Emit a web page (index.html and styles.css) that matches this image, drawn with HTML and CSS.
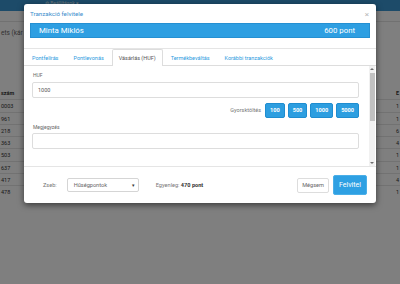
FILE: index.html
```html
<!DOCTYPE html>
<html lang="hu">
  <head>
    <meta charset="utf-8">
    <meta name="viewport" content="width=device-width, initial-scale=1">
    <title>Tranzakció felvitele</title>
    <link rel="stylesheet" href="styles.css">
  </head>
  <body>
    <div class='page'>
        <div class='navbar'><span class='nav-item'>&#9881; Beállítások &#9662;</span></div>
        <div class='subbar'></div>
        <div class='search'>ets (kár</div>
        <div class='table'>
            <div class='row head'><span>szám</span><span></span><span>E</span></div>
            <div class='row'><span>0003</span><span></span><span>1</span></div>
            <div class='row'><span>961</span><span></span><span>1</span></div>
            <div class='row'><span>218</span><span></span><span>6</span></div>
            <div class='row'><span>363</span><span></span><span>4</span></div>
            <div class='row'><span>503</span><span></span><span>1</span></div>
            <div class='row'><span>637</span><span></span><span>1</span></div>
            <div class='row'><span>417</span><span></span><span>4</span></div>
            <div class='row'><span>478</span><span></span><span>1</span></div>
        </div>
    </div>
    <div class='backdrop'></div>
    <div class='modal'>
        <div class='modal-header'>
            <div class='title-row'>
                <h4 class='title'>Tranzakció felvitele</h4>
                <span class='close'>&times;</span>
            </div>
            <div class='member'><span>Minta Miklós</span><span>600 pont</span></div>
        </div>
        <ul class='tabs'>
            <li class='tab'>Pontfelírás</li>
            <li class='tab'>Pontlevonás</li>
            <li class='tab active'>Vásárlás (HUF)</li>
            <li class='tab'>Termékbeváltás</li>
            <li class='tab'>Korábbi tranzakciók</li>
        </ul>
        <div class='pane'>
            <div class='pane-body'>
                <div class='label'>HUF</div>
                <div class='field'>1000</div>
                <div class='quick'>
                    <span class='quick-label'>Gyorsktöltés</span>
                    <span class='btn-num'>100</span>
                    <span class='btn-num'>500</span>
                    <span class='btn-num'>1000</span>
                    <span class='btn-num'>5000</span>
                </div>
                <div class='label second'>Megjegyzés</div>
                <div class='field'></div>
            </div>
            <div class='scrollbar'>
                <span class='arrow up'></span>
                <span class='thumb'></span>
                <span class='arrow down'></span>
            </div>
        </div>
        <div class='modal-footer'>
            <span class='zseb'>Zseb:</span>
            <div class='select'><span>Hűségpontok</span><span class='caret'>&#9662;</span></div>
            <span class='balance'>Egyenleg: <b>470 pont</b></span>
            <div class='actions'>
                <span class='btn-cancel'>Mégsem</span>
                <span class='btn-save'>Felvitel</span>
            </div>
        </div>
    </div>
  </body>
</html>
```

FILE: styles.css
```css
body {
    margin: 0;
    width: 400px;
    height: 284px;
    overflow: hidden;
    position: relative;
    background-color: #FFFFFF;
    font-family: Roboto, "Liberation Sans", sans-serif;
    color: #333333;
}
.navbar {
    height: 11px;
    background-color: #3B97D3;
    padding-left: 45px;
    box-sizing: border-box;
}
.nav-item {
    display: block;
    font-size: 5px;
    line-height: 7px;
    color: #D8ECF8;
}
.subbar {
    height: 10px;
    border-bottom: 1px solid #E2E2E2;
}
.search {
    height: 22px;
    white-space: nowrap;
    line-height: 22px;
    font-size: 6.5px;
    color: #666666;
    padding-left: 1px;
}
.table {
    margin-top: 43px;
}
.row {
    display: grid;
    grid-template-columns: 24px 1fr 10px;
    height: 12.25px;
    line-height: 12.25px;
    border-top: 1px solid #E4E4E4;
    box-sizing: border-box;
    font-size: 5.5px;
    color: #333333;
}
.row span:first-child {
    padding-left: 1px;
}
.row span:last-child {
    padding-left: 6px;
}
.row.head {
    border-top: none;
    font-weight: bold;
}
.backdrop {
    position: absolute;
    top: 0;
    left: 0;
    width: 100%;
    height: 100%;
    background-color: rgba(0,0,0,0.5);
}
.modal {
    position: absolute;
    top: 4px;
    left: 24px;
    width: 352px;
    height: 199px;
    display: flex;
    flex-direction: column;
    background-color: #FFFFFF;
    border-radius: 3px;
    box-shadow: 0 2px 6px rgba(0,0,0,0.55);
}
.modal-header {
    padding: 6px 6px 10px;
    border-bottom: 1px solid #E5E5E5;
}
.title-row {
    display: flex;
    justify-content: space-between;
    align-items: center;
    height: 8px;
}
.title {
    margin: 0;
    font-size: 6.2px;
    font-weight: normal;
    color: #3A8DCC;
}
.close {
    font-size: 8px;
    color: #B8B8B8;
    padding-right: 1px;
}
.member {
    margin-top: 5px;
    height: 15px;
    box-sizing: border-box;
    display: flex;
    justify-content: space-between;
    align-items: center;
    padding: 0 14px 0 8px;
    background-color: #2E9FE2;
    border: 1px solid #2590D2;
    color: #FFFFFF;
    font-size: 7.8px;
}
.tabs {
    display: flex;
    margin: 0;
    padding: 0 0 0 1px;
    list-style: none;
    border-bottom: 1px solid #DDDDDD;
}
.tab {
    padding: 4px 6px 3px;
    margin-right: 1px;
    margin-bottom: -1px;
    line-height: 8px;
    font-size: 5.5px;
    color: #2D9BE0;
    border: 1px solid transparent;
    border-bottom: none;
    border-radius: 2px 2px 0 0;
}
.tab.active {
    color: #555555;
    background-color: #FFFFFF;
    border-color: #DDDDDD;
    padding-bottom: 4px;
}
.pane {
    height: 100px;
    display: flex;
}
.pane-body {
    flex: 1;
    overflow: hidden;
    padding: 6px 10px 0 8px;
}
.scrollbar {
    width: 6px;
    margin-right: 1px;
    display: flex;
    flex-direction: column;
    align-items: center;
    background-color: #F1F1F1;
}
.arrow {
    width: 0;
    height: 0;
    border-left: 2px solid transparent;
    border-right: 2px solid transparent;
}
.arrow.up {
    margin-top: 2px;
    border-bottom: 2px solid #6E6E6E;
}
.arrow.down {
    margin-top: auto;
    margin-bottom: 2px;
    border-top: 2px solid #6E6E6E;
}
.thumb {
    width: 5px;
    height: 48px;
    margin-top: 3px;
    background-color: #C1C1C1;
}
.label {
    font-size: 5px;
    line-height: 7px;
    color: #666666;
    margin: 0 0 2.5px 1px;
}
.label.second {
    margin-top: 6px;
}
.field {
    height: 16px;
    box-sizing: border-box;
    border: 1px solid #DDDDDD;
    border-radius: 2px;
    padding: 0 5px;
    line-height: 14px;
    font-size: 5.5px;
    color: #555555;
}
.quick {
    display: flex;
    justify-content: flex-end;
    align-items: center;
    gap: 3px;
    margin-top: 5px;
}
.quick-label {
    font-size: 5.5px;
    color: #777777;
    margin-right: 1px;
}
.btn-num {
    height: 15px;
    box-sizing: border-box;
    padding: 0 4px;
    line-height: 13px;
    font-size: 5.6px;
    font-weight: bold;
    color: #FFFFFF;
    background-color: #2D9EE0;
    border: 1px solid #1F8DD0;
    border-radius: 2px;
}
.modal-footer {
    flex: 1;
    display: flex;
    align-items: center;
    padding: 0 9px 0 19px;
    border-top: 1px solid #E5E5E5;
    font-size: 5.6px;
    color: #555555;
}
.zseb {
    color: #777777;
}
.select {
    margin-left: 10px;
    width: 72px;
    height: 14px;
    box-sizing: border-box;
    display: flex;
    justify-content: space-between;
    align-items: center;
    padding: 0 3px 0 6px;
    border: 1px solid #D5D5D5;
    border-radius: 2px;
    color: #666666;
}
.caret {
    font-size: 5px;
    color: #333333;
}
.balance {
    margin-left: 17px;
    color: #777777;
}
.balance b {
    color: #333333;
}
.actions {
    margin-left: auto;
    display: flex;
    align-items: center;
    gap: 4px;
}
.btn-cancel {
    height: 15px;
    box-sizing: border-box;
    padding: 0 4px;
    line-height: 13px;
    border: 1px solid #DDDDDD;
    border-radius: 2px;
    color: #666666;
}
.btn-save {
    height: 20px;
    box-sizing: border-box;
    padding: 0 5px;
    line-height: 18px;
    font-size: 7px;
    color: #FFFFFF;
    background-color: #2EA0E3;
    border: 1px solid #4BAFE8;
    border-radius: 2px;
}
```
